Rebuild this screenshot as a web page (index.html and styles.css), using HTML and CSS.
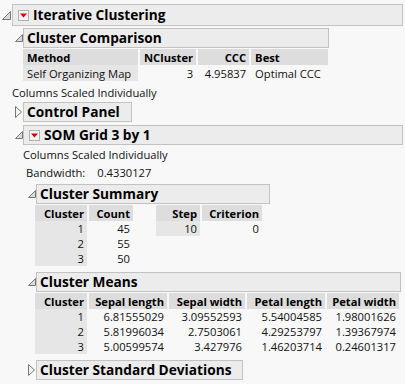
FILE: index.html
```html
<!DOCTYPE html>
<html lang="en">
<head>
<meta charset="utf-8">
<title>Iterative Clustering</title>
<link rel="stylesheet" href="styles.css">
</head>
<body>
<div class="report">
  <div class="node">
    <div class="head">
      <span class="tri"><svg class="t-open8" width="9" height="9" viewBox="0 0 9 9"><path d="M0.5 8.5 H8.5 V0.5 Z" fill="#dadada" stroke="#777"/></svg></span>
      <div class="bar bar-top fill">
        <span class="menu"><svg width="11" height="11" viewBox="0 0 11 11"><rect x="0.5" y="0.5" width="10" height="10" fill="#f4f4f4" stroke="#b0b0b0"/><path d="M2 3.5 H9 L5.5 7.5 Z" fill="#d40000"/></svg></span>
        <span class="title">Iterative Clustering</span>
      </div>
    </div>
    <div class="body">
      <div class="node lvl1">
        <div class="head">
          <span class="tri"><svg class="t-open7" width="8" height="8" viewBox="0 0 8 8"><path d="M0.5 7.5 H7.5 V0.5 Z" fill="#dadada" stroke="#777"/></svg></span>
          <div class="bar w-cc"><span class="title">Cluster Comparison</span></div>
        </div>
        <div class="body">
          <table class="grid rows16">
            <thead>
              <tr><th class="l c-method">Method</th><th class="c-ncl">NCluster</th><th class="c-ccc">CCC</th><th class="l c-best">Best</th></tr>
            </thead>
            <tbody>
              <tr><td class="l lab">Self Organizing Map</td><td>3</td><td>4.95837</td><td class="l">Optimal CCC</td></tr>
            </tbody>
          </table>
        </div>
      </div>
      <p class="note note-top">Columns Scaled Individually</p>
      <div class="node lvl1 cp">
        <div class="head">
          <span class="tri"><svg class="t-closed" width="7" height="12" viewBox="0 0 7 12"><path d="M0.5 0.5 L6.5 6 L0.5 11.5 Z" fill="#f2f2f2" stroke="#777"/></svg></span>
          <div class="bar w-cp"><span class="title">Control Panel</span></div>
        </div>
      </div>
      <div class="node lvl1 som">
        <div class="head">
          <span class="tri"><svg class="t-open7" width="8" height="8" viewBox="0 0 8 8"><path d="M0.5 7.5 H7.5 V0.5 Z" fill="#dadada" stroke="#777"/></svg></span>
          <div class="bar fill">
            <span class="menu"><svg width="11" height="11" viewBox="0 0 11 11"><rect x="0.5" y="0.5" width="10" height="10" fill="#f4f4f4" stroke="#b0b0b0"/><path d="M2 3.5 H9 L5.5 7.5 Z" fill="#d40000"/></svg></span>
            <span class="title">SOM Grid 3 by 1</span>
          </div>
        </div>
        <div class="body">
          <p class="note note-som">Columns Scaled Individually</p>
          <p class="note bandwidth"><span>Bandwidth:</span><span class="bw-val">0.4330127</span></p>

          <div class="node lvl2 cs">
            <div class="head">
              <span class="tri"><svg class="t-open7" width="8" height="8" viewBox="0 0 8 8"><path d="M0.5 7.5 H7.5 V0.5 Z" fill="#dadada" stroke="#777"/></svg></span>
              <div class="bar w-cs"><span class="title">Cluster Summary</span></div>
            </div>
            <div class="body">
              <div class="pair">
                <table class="grid rows15">
                  <thead><tr><th class="c-clu">Cluster</th><th class="c-cnt">Count</th></tr></thead>
                  <tbody>
                    <tr><td class="lab">1</td><td>45</td></tr>
                    <tr><td class="lab">2</td><td>55</td></tr>
                    <tr><td class="lab">3</td><td>50</td></tr>
                  </tbody>
                </table>
                <table class="grid rows15">
                  <thead><tr><th class="c-step">Step</th><th class="c-crit">Criterion</th></tr></thead>
                  <tbody>
                    <tr><td class="lab">10</td><td>0</td></tr>
                  </tbody>
                </table>
              </div>
            </div>
          </div>

          <div class="node lvl2 cm">
            <div class="head">
              <span class="tri"><svg class="t-open7" width="8" height="8" viewBox="0 0 8 8"><path d="M0.5 7.5 H7.5 V0.5 Z" fill="#dadada" stroke="#777"/></svg></span>
              <div class="bar w-cm"><span class="title">Cluster Means</span></div>
            </div>
            <div class="body">
              <table class="grid rows15 means">
                <thead><tr><th class="c-clu">Cluster</th><th class="c-sl">Sepal length</th><th class="c-sw">Sepal width</th><th class="c-pl">Petal length</th><th class="c-pw">Petal width</th></tr></thead>
                <tbody>
                  <tr><td class="lab">1</td><td>6.81555029</td><td>3.09552593</td><td>5.54004585</td><td>1.98001626</td></tr>
                  <tr><td class="lab">2</td><td>5.81996034</td><td>2.7503061</td><td>4.29253797</td><td>1.39367974</td></tr>
                  <tr><td class="lab">3</td><td>5.00599574</td><td>3.427976</td><td>1.46203714</td><td>0.24601317</td></tr>
                </tbody>
              </table>
            </div>
          </div>

          <div class="node lvl2 csd">
            <div class="head">
              <span class="tri"><svg class="t-closed" width="7" height="12" viewBox="0 0 7 12"><path d="M0.5 0.5 L6.5 6 L0.5 11.5 Z" fill="#f2f2f2" stroke="#777"/></svg></span>
              <div class="bar w-csd"><span class="title">Cluster Standard Deviations</span></div>
            </div>
          </div>
        </div>
      </div>
    </div>
  </div>
</div>
</body>
</html>
```
FILE: styles.css
```css
* { box-sizing: border-box; }

html, body {
  margin: 0;
  padding: 0;
  background: #f8f8f8;
}

body {
  font-family: "Open Sans", "Noto Sans", sans-serif;
  font-size: 11.2px;
  color: #111;
}

.report {
  padding: 4px 2px 0 2px;
}

.head {
  display: flex;
  align-items: center;
}

.tri {
  width: 10px;
  flex: none;
  display: flex;
  align-items: center;
}

.t-open8 { margin-left: 0; }
.t-open7 { margin-left: 2px; }
.t-closed { margin-left: 2px; }

.bar {
  display: flex;
  align-items: center;
  height: 20px;
  background: #ececec;
  border: 1px solid #c2c2c2;
  padding-left: 3px;
  flex: none;
}

.bar.fill { flex: 1; }
.bar-top { height: 22px; }

.menu {
  display: flex;
  margin-left: 2px;
  margin-right: 4px;
}

.title {
  font-weight: 700;
  font-size: 13.7px;
  color: #000;
  line-height: 16px;
  white-space: nowrap;
}

.body {
  padding-left: 10px;
}

.lvl1 { margin-left: 1px; margin-top: 2px; }
.cp { margin-top: 1px; }
.som { margin-top: 3px; }

.lvl2 { margin-left: 3px; }
.cs { margin-top: 3px; }
.cm { margin-top: 6px; }
.csd { margin-top: 6px; }

.w-cc { width: 306px; }
.w-cp { width: 109px; }
.w-cs { width: 234px; }
.w-cm { width: 365px; }
.w-csd { width: 207px; }

/* tables */
.grid {
  border-collapse: separate;
  border-spacing: 2px 0;
  margin-left: -2px;
  margin-top: 1px;
}

.lvl2 .grid { margin-left: -3px; }

.grid th,
.grid td {
  padding: 0 3px 0 4px;
  text-align: right;
  white-space: nowrap;
  line-height: 15px;
}

.grid th {
  background: #dddddd;
  font-weight: 700;
  color: #000;
  height: 16px;
}

.grid .l { text-align: left; }

.grid td.lab { background: #e6e6e6; }

.rows16 td { height: 16px; }
.rows15 td { height: 15px; }

.c-method { width: 115px; }
.c-ncl { width: 56px; }
.c-ccc { width: 51px; }
.c-best { width: 77px; }

.c-clu { width: 52px; }
.c-cnt { width: 44px; }
.c-step { width: 44px; }
.c-crit { width: 60px; }

.c-sl { width: 78px; }
.c-sw { width: 76px; }
.c-pl { width: 78px; }
.c-pw { width: 72px; }

.pair {
  display: flex;
  align-items: flex-start;
  gap: 22px;
}

/* notes */
.note {
  margin: 0;
  line-height: 16px;
  white-space: nowrap;
}

.note-top { margin-top: 4px; }
.note-som { margin-top: 2px; }

.bandwidth {
  margin-top: 2px;
  margin-left: 3px;
  display: flex;
}

.bw-val { margin-left: 12px; }
```
